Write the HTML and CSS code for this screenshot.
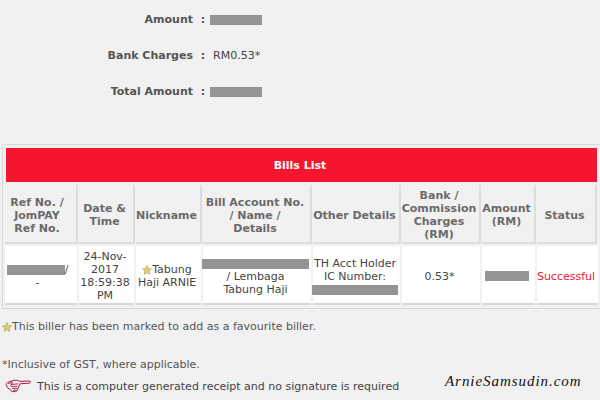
FILE: index.html
```html
<!DOCTYPE html>
<html lang="en">
<head>
<meta charset="utf-8">
<title>Receipt</title>
<link rel="stylesheet" href="styles.css">
</head>
<body>
<svg class="defs" width="0" height="0" aria-hidden="true">
  <symbol id="star" viewBox="0 0 10 10">
    <path d="M5 .6 6.3 3.7 9.6 3.9 7.1 6 7.9 9.4 5 7.6 2.1 9.4 2.9 6 .4 3.9 3.7 3.7Z" fill="#e3cf6a" stroke="#a89a4a" stroke-width=".6"/>
  </symbol>
</svg>
<section class="summary">
  <div class="summary-row"><span class="summary-label">Amount</span><span class="summary-colon">:</span><span class="mask mask-summary"></span></div>
  <div class="summary-row"><span class="summary-label">Bank Charges</span><span class="summary-colon">:</span><span class="summary-value">RM0.53*</span></div>
  <div class="summary-row"><span class="summary-label">Total Amount</span><span class="summary-colon">:</span><span class="mask mask-summary"></span></div>
</section>
<section class="panel">
  <h2 class="panel-title">Bills List</h2>
  <div class="bills">
    <div class="cell head cell-first">Ref No. /<br>JomPAY<br>Ref No.</div>
    <div class="cell head">Date &amp;<br>Time</div>
    <div class="cell head">Nickname</div>
    <div class="cell head">Bill Account No.<br>/ Name /<br>Details</div>
    <div class="cell head">Other Details</div>
    <div class="cell head">Bank /<br>Commission<br>Charges<br>(RM)</div>
    <div class="cell head">Amount<br>(RM)</div>
    <div class="cell head">Status</div>
    <div class="cell data cell-first"><div><span class="mask mask-ref"></span>/<br>-</div></div>
    <div class="cell data">24-Nov-<br>2017<br>18:59:38<br>PM</div>
    <div class="cell data"><div><svg class="star"><use href="#star"/></svg>Tabung<br>Haji ARNIE</div></div>
    <div class="cell data"><div><span class="mask mask-account"></span><br>/ Lembaga<br>Tabung Haji</div></div>
    <div class="cell data"><div>TH Acct Holder<br>IC Number:<br><span class="mask mask-other"></span></div></div>
    <div class="cell data">0.53*</div>
    <div class="cell data"><span class="mask mask-amount"></span></div>
    <div class="cell data status">Successful</div>
  </div>
</section>
<p class="note note-fav"><svg class="star"><use href="#star"/></svg>This biller has been marked to add as a favourite biller.</p>
<p class="note note-gst">*Inclusive of GST, where applicable.</p>
<div class="footer">
  <svg class="hand" viewBox="0 0 26 14" aria-hidden="true">
    <path d="M25.5 2.6C25.6 3.6 25.2 4.2 24 4.2L15 4.8C14 6.5 14 8 13 9.5L12 11.8C10.5 13 7.5 13 6 11.8L4.5 9.8 2.4 8.8 1 5.2 2.6 3.4 8 1.6C10.5 .9 13 1.2 15 2.4L24 2Z" fill="#f7eef1" stroke="#a81c4a" stroke-width="1"/>
    <path d="M3 4.6 7.5 3.4M6 5.5 13.5 4.8M6 7.5 12.5 7.2M7 9.5 12.2 9.3M8 11.4 11.5 11.2M7.5 3.4 5.5 7" fill="none" stroke="#a81c4a" stroke-width=".9"/>
  </svg>
  <span class="footer-text">This is a computer generated receipt and no signature is required</span>
  <span class="brand">ArnieSamsudin.com</span>
</div>
</body>
</html>
```
FILE: styles.css
```css
html, body { margin: 0; padding: 0; }
body {
  width: 600px;
  height: 400px;
  overflow: hidden;
  background: #f1f1f1;
  color: #444;
  font-family: "DejaVu Sans", Verdana, sans-serif;
  font-size: 11px;
  line-height: 13px;
}
.defs { position: absolute; }
.mask { display: inline-block; background: #949494; vertical-align: middle; }
.summary {
  display: flex;
  flex-direction: column;
  gap: 23px;
  padding-top: 13px;
  height: 131px;
  box-sizing: border-box;
}
.summary-row { display: flex; align-items: center; height: 13px; }
.summary-label { width: 193px; text-align: right; font-weight: bold; color: #555; }
.summary-colon { width: 17px; padding-left: 3px; box-sizing: border-box; text-align: center; font-weight: bold; color: #555; }
.summary-value { margin-left: 3px; }
.mask-summary { width: 52px; height: 10px; }
.panel {
  margin: 13px 0 0 2px;
  border: 1px solid #d8d8d8;
  border-right: 0;
  height: 165px;
  padding: 3px 0 0 0;
  box-sizing: border-box;
}
.panel-title {
  margin: 0 3px 0 3px;
  padding-right: 3px;
  height: 34px;
  line-height: 35px;
  background: #f5152f;
  color: #fff;
  font-size: 11px;
  text-align: center;
}
.bills {
  display: grid;
  grid-template-columns: 74px 57px 67px 110px 89px 80px 55px 61px;
  grid-template-rows: 61px 59px;
  margin: 3px 0 0 2px;
}
.cell {
  display: flex;
  align-items: center;
  justify-content: center;
  text-align: center;
  box-sizing: border-box;
}
.head {
  font-weight: bold;
  color: #6a6a6a;
  border-right: 2px solid #dcdcdc;
  border-bottom: 2px solid #dcdcdc;
  margin: 0 1px 2px 0;
  padding: 3px 3px 0 0;
}
.data {
  background: #fff;
  margin-right: 2px;
  border-bottom: 2px solid #d8d8d8;
  padding: 3px 3px 0 0;
  white-space: nowrap;
}
.cell-first { padding-right: 7px; }
.status { color: #f5152f; margin-right: 0; }
.star { width: 10px; height: 10px; vertical-align: -2px; }
.mask-ref { width: 58px; height: 10px; }
.mask-account { width: 107px; height: 10px; }
.mask-other { width: 86px; height: 10px; }
.mask-amount { width: 44px; height: 10px; }
.note { margin: 0; color: #555; }
.note-fav { margin: 11px 0 0 2px; }
.note-gst { margin: 25px 0 0 2px; }
.footer { display: flex; align-items: center; margin: 7px 0 0 5px; height: 16px; }
.hand { width: 26px; height: 14px; flex: none; }
.footer-text { margin-left: 6px; width: 408px; flex: none; }
.brand {
  font-family: "Liberation Serif", serif;
  font-style: italic;
  font-size: 15px;
  color: #111;
  letter-spacing: .95px;
  margin-top: -10px;
}
```
